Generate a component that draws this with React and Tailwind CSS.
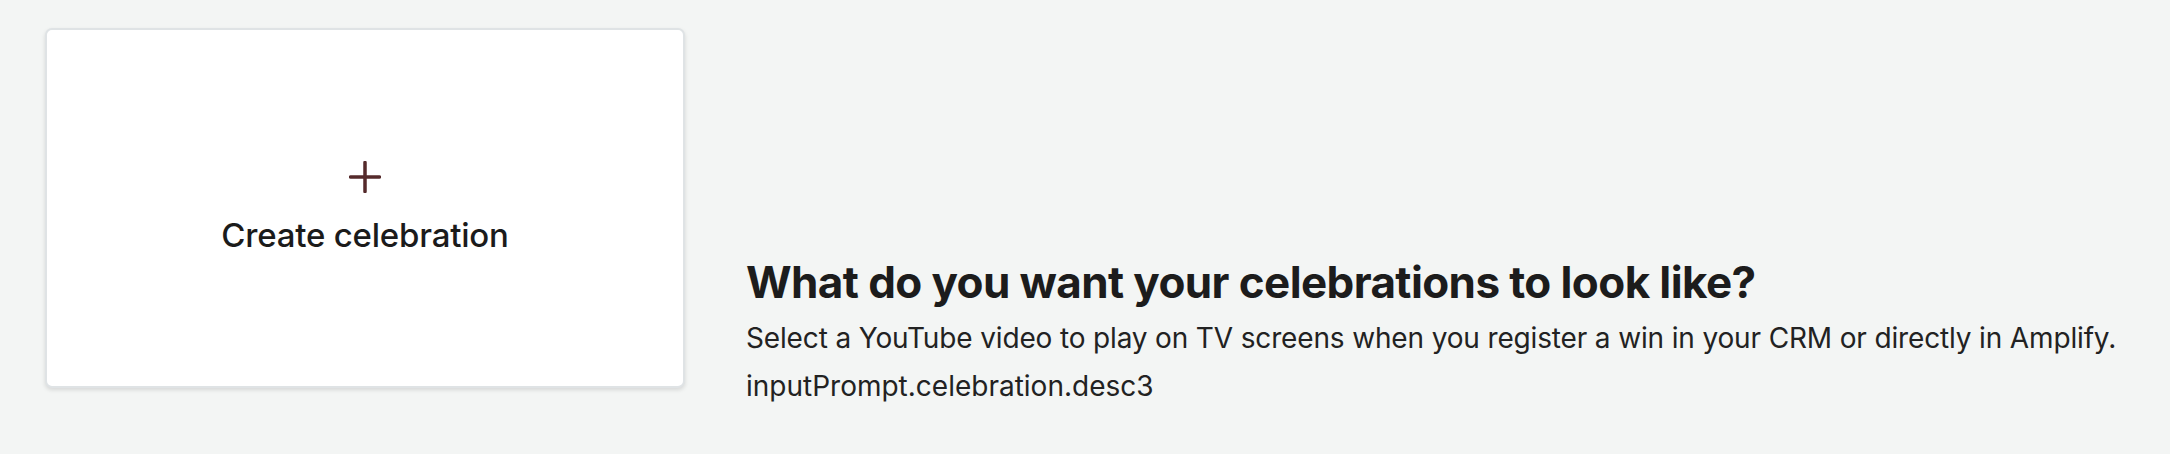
import React from "react";

const PlusIcon = () => (
  <svg width="32" height="32" viewBox="0 0 32 32" fill="none">
    <path d="M16 1.5V30.5M1.5 16H30.5" stroke="#552a2b" strokeWidth="3.5" strokeLinecap="round" />
  </svg>
);

const CreateCard = () => (
  <button className="flex h-[360px] w-[640px] shrink-0 flex-col items-center justify-center gap-[22px] rounded-[7px] border-2 border-[#dfe3e5] bg-white shadow-[0_2px_4px_rgba(0,0,0,0.12)]">
    <PlusIcon />
    <span className="text-[33px] font-medium leading-[40px] tracking-[-0.2px] text-[#1b1b1b]">Create celebration</span>
  </button>
);

export default function App() {
  return (
    <div className="flex h-[454px] w-full items-start gap-[61px] bg-[#f3f5f4] pl-[45px] pt-[28px] font-['Inter',sans-serif]">
      <CreateCard />
      <div className="flex flex-col pt-[232px] text-[#1c1c1c]">
        <h1 className="text-[44px] font-bold leading-[44px] tracking-[-0.6px]">
          What do you want your celebrations to look like?
        </h1>
        <p className="mt-[10px] text-[28px] leading-[48px] tracking-[-0.15px] text-[#222]">
          Select a YouTube video to play on TV screens when you register a win in your CRM or directly in Amplify.
        </p>
        <p className="text-[28px] leading-[48px] text-[#222]">inputPrompt.celebration.desc3</p>
      </div>
    </div>
  );
}
